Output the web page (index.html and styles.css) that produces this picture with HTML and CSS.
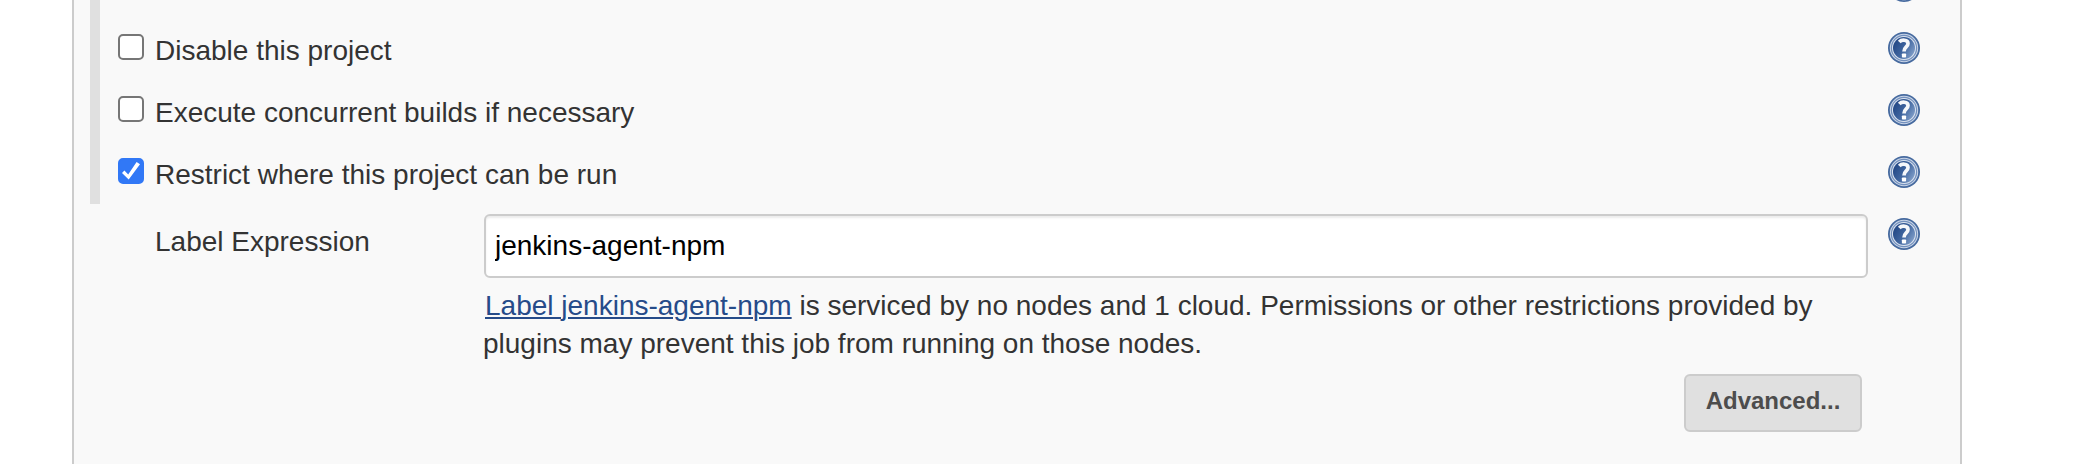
FILE: index.html
```html
<!DOCTYPE html>
<html lang="en">
<head>
<meta charset="utf-8">
<title>Project configuration</title>
<link rel="stylesheet" href="styles.css">
</head>
<body>
<svg class="defs" width="0" height="0" aria-hidden="true">
  <defs>
    <linearGradient id="disc" x1="0" y1="0.2" x2="1" y2="0.8">
      <stop offset="0.1" stop-color="#264b88"/>
      <stop offset="0.5" stop-color="#3f659f"/>
      <stop offset="1" stop-color="#86a3cc"/>
    </linearGradient>
    <symbol id="help" viewBox="0 0 32 32">
      <circle cx="16" cy="16" r="16" fill="#466a9f"/>
      <circle cx="16" cy="16" r="14.2" fill="#c9d5e7"/>
      <circle cx="16" cy="16" r="13.2" fill="#7390bd"/>
      <circle cx="16" cy="16" r="12" fill="#dbe3ef"/>
      <circle cx="16" cy="16" r="11" fill="url(#disc)"/>
      <path d="M11.3 10C13.5 7.4 20 7.4 20 11.5C20 15.2 16 14.6 16 19.6" fill="none" stroke="#fff" stroke-opacity="0.95" stroke-width="3.7"/>
      <rect x="13.9" y="21.4" width="4.2" height="4.2" rx="0.8" fill="#fff"/>
    </symbol>
  </defs>
</svg>
<main class="panel">
  <section class="options">
    <div class="row row-cut"><svg class="help"><use href="#help"/></svg></div>
    <div class="row"><label class="option"><input class="check" type="checkbox"><span class="text">Disable this project</span></label><svg class="help"><use href="#help"/></svg></div>
    <div class="row"><label class="option"><input class="check" type="checkbox"><span class="text">Execute concurrent builds if necessary</span></label><svg class="help"><use href="#help"/></svg></div>
    <div class="row"><label class="option"><input class="check" type="checkbox" checked><span class="text">Restrict where this project can be run</span></label><svg class="help"><use href="#help"/></svg></div>
  </section>
  <section class="field">
    <label class="field-label" for="expr">Label Expression</label>
    <div class="field-body">
      <input class="field-input" id="expr" type="text" value="jenkins-agent-npm">
      <p class="note"><a class="link" href="#">Label jenkins-agent-npm</a> is serviced by no nodes and 1 cloud. Permissions or other restrictions provided by plugins may prevent this job from running on those nodes.</p>
      <button class="advanced" type="button">Advanced...</button>
    </div>
    <svg class="help"><use href="#help"/></svg>
  </section>
</main>
</body>
</html>
```
FILE: styles.css
```css
* { box-sizing: border-box; }

body {
  margin: 0;
  height: 464px;
  overflow: hidden;
  background: #fff;
  color: #333;
  font: 28px/38px "Liberation Sans", Arial, sans-serif;
}

.defs { position: absolute; }

.panel {
  width: 1890px;
  height: 464px;
  margin-left: 72px;
  padding-left: 16px;
  background: #f9f9f9;
  border: solid #ccc;
  border-width: 0 2px;
  overflow: hidden;
}

.options {
  height: 204px;
  border-left: 10px solid #e0e0e0;
  overflow: hidden;
}

.row {
  display: flex;
  justify-content: space-between;
  align-items: flex-start;
  height: 62px;
  padding: 0 40px 0 18px;
}

.row-cut {
  height: 32px;
  justify-content: flex-end;
}

.row-cut .help { margin-top: -30px; }

.option {
  display: flex;
  align-items: flex-start;
}

.check {
  appearance: none;
  display: grid;
  width: 26px;
  height: 26px;
  margin: 2px 11px 0 0;
  background: #fff;
  border: 2px solid #767676;
  border-radius: 5px;
}

.check:checked {
  background: #3178f6;
  border-color: #3178f6;
}

.check:checked::before {
  content: "";
  width: 22px;
  height: 22px;
  background: #fff;
  clip-path: polygon(2px 13px, 4.4px 10.6px, 8.2px 14.4px, 16.6px 2px, 20px 4.3px, 8.7px 19.5px);
}

.help {
  flex: none;
  width: 32px;
  height: 32px;
}

.field {
  display: flex;
  align-items: flex-start;
  padding: 10px 40px 0 65px;
}

.field-label {
  width: 321px;
  margin: 9px 8px 0 0;
}

.field-body {
  display: flex;
  flex-direction: column;
  width: 1386px;
  padding-left: 1px;
  margin-right: 20px;
}

.field-input {
  width: 1384px;
  height: 64px;
  margin-left: 1px;
  padding: 0 9px;
  border: 2px solid #ccc;
  border-radius: 6px;
  background: #fff;
  box-shadow: inset 0 2px 2px rgba(0, 0, 0, 0.075);
  color: #000;
  font: inherit;
}

.field .help { margin-top: 4px; }

.note {
  width: 1370px;
  margin: 9px 0 0;
}

.link {
  margin-left: 2px;
  color: #264b89;
  text-decoration: underline;
  text-decoration-thickness: 2px;
  text-underline-offset: 2px;
}

.advanced {
  align-self: flex-end;
  width: 178px;
  height: 58px;
  margin: 11px 6px 0 0;
  padding: 0 0 4px;
  background: #e0e0e0;
  border: 2px solid #ccc;
  border-radius: 6px;
  color: #4d4d4d;
  font: bold 24px "Liberation Sans", Arial, sans-serif;
}
```
